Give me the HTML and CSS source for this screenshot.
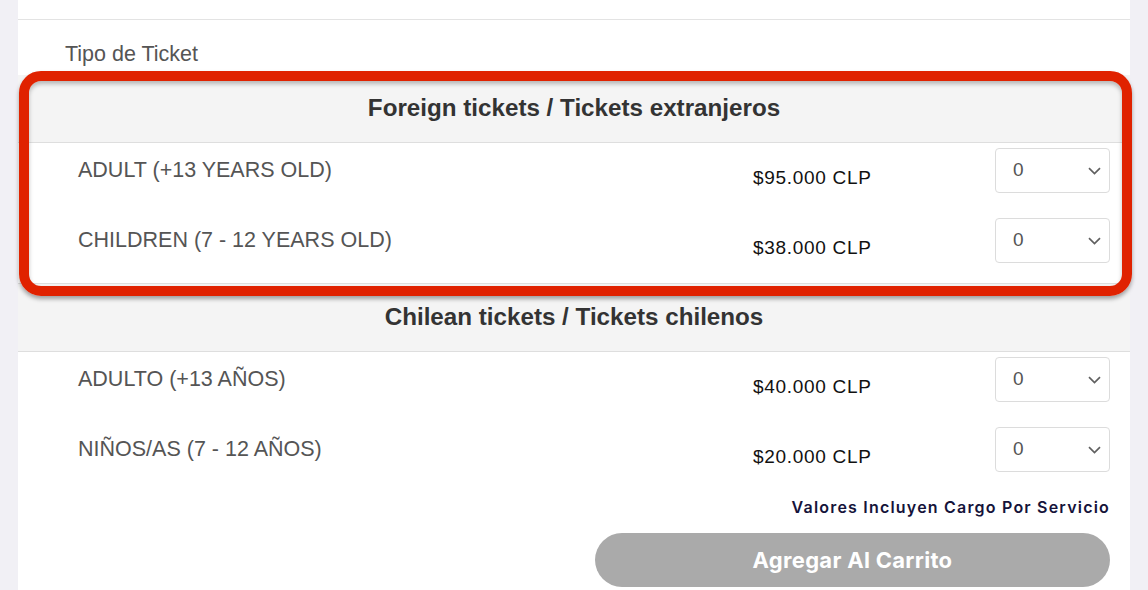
FILE: index.html
```html
<!DOCTYPE html>
<html lang="es">
<head>
<meta charset="utf-8">
<title>Tipo de Ticket</title>
<link rel="stylesheet" href="styles.css">
</head>
<body>
<div class="page">
  <div class="card">
    <div class="topbar"></div>
    <div class="type-label">Tipo de Ticket</div>

    <section class="group group-first">
      <h2 class="group-title">Foreign tickets / Tickets extranjeros</h2>
      <div class="row">
        <div class="name">ADULT (+13 YEARS OLD)</div>
        <div class="price">$95.000 CLP</div>
        <div class="qty"><span>0</span><svg class="chev" viewBox="0 0 13 8" width="13" height="8"><path d="M1 1.2 L6.5 6.5 L12 1.2" fill="none" stroke="#606060" stroke-width="1.7"/></svg></div>
      </div>
      <div class="row">
        <div class="name">CHILDREN (7 - 12 YEARS OLD)</div>
        <div class="price">$38.000 CLP</div>
        <div class="qty"><span>0</span><svg class="chev" viewBox="0 0 13 8" width="13" height="8"><path d="M1 1.2 L6.5 6.5 L12 1.2" fill="none" stroke="#606060" stroke-width="1.7"/></svg></div>
      </div>
      <div class="highlight"></div>
    </section>

    <section class="group">
      <h2 class="group-title">Chilean tickets / Tickets chilenos</h2>
      <div class="row">
        <div class="name">ADULTO (+13 AÑOS)</div>
        <div class="price">$40.000 CLP</div>
        <div class="qty"><span>0</span><svg class="chev" viewBox="0 0 13 8" width="13" height="8"><path d="M1 1.2 L6.5 6.5 L12 1.2" fill="none" stroke="#606060" stroke-width="1.7"/></svg></div>
      </div>
      <div class="row">
        <div class="name">NIÑOS/AS (7 - 12 AÑOS)</div>
        <div class="price">$20.000 CLP</div>
        <div class="qty"><span>0</span><svg class="chev" viewBox="0 0 13 8" width="13" height="8"><path d="M1 1.2 L6.5 6.5 L12 1.2" fill="none" stroke="#606060" stroke-width="1.7"/></svg></div>
      </div>
    </section>

    <div class="footer">
      <div class="note">Valores Incluyen Cargo Por Servicio</div>
      <button class="cart" type="button">Agregar Al Carrito</button>
    </div>
  </div>
</div>
</body>
</html>
```

FILE: styles.css
```css
* { box-sizing: border-box; }
html, body { margin: 0; padding: 0; }
body {
  background: #f1f0f5;
  font-family: "Liberation Sans", Arial, sans-serif;
  width: 1148px;
  height: 590px;
  overflow: hidden;
}
.page {
  padding: 0 18px;
}
.card {
  background: #ffffff;
  width: 1112px;
  height: 600px;
}
.topbar {
  height: 20px;
  border-bottom: 1px solid #e3e3e3;
}
.type-label {
  color: #555;
  font-size: 21.5px;
  padding: 22px 0 0 47px;
  height: 55px;
  line-height: 24px;
}
.group {
  position: relative;
}
.group-first {
  border-bottom: 1px solid #dedede;
}
.group-title {
  margin: 0;
  background: #f4f4f4;
  border-bottom: 1px solid #dedede;
  height: 68px;
  line-height: 66px;
  text-align: center;
  font-size: 24.2px;
  font-weight: bold;
  color: #333;
}
.row {
  display: grid;
  grid-template-columns: 675px 242px 115px;
  padding-left: 60px;
  height: 70px;
  align-items: start;
}
.name {
  color: #555;
  font-size: 21.5px;
  line-height: 24px;
  padding-top: 15px;
}
.price {
  color: #111;
  font-size: 19px;
  line-height: 22px;
  padding-top: 24px;
  letter-spacing: 0.7px;
}
.qty {
  margin-top: 5px;
  height: 45px;
  border: 1px solid #dcdcdc;
  border-radius: 4px;
  display: flex;
  align-items: center;
  justify-content: space-between;
  padding: 0 8px 0 17px;
  color: #555;
  font-size: 19px;
}
.qty span { position: relative; top: -1px; }
.chev { display: block; }
.highlight {
  position: absolute;
  z-index: 2;
  left: 1px;
  top: -4px;
  width: 1113px;
  height: 225px;
  border: 10px solid #e02200;
  border-radius: 22px;
  box-shadow: 0 3px 4px rgba(0,0,0,0.35), inset 0 3px 4px rgba(0,0,0,0.25);
  pointer-events: none;
}
.footer {
  display: flex;
  flex-direction: column;
  align-items: flex-end;
  padding: 0 20px 0 0;
}
.note {
  margin-top: 5px;
  font-family: Inter, "Open Sans", sans-serif;
  font-weight: 600;
  font-size: 16px;
  letter-spacing: 1.2px;
  color: #15133a;
  line-height: 20px;
}
.cart {
  margin-top: 16px;
  width: 515px;
  height: 54px;
  border: none;
  border-radius: 27px;
  background: #aaaaaa;
  color: #fff;
  font-family: Inter, "Open Sans", sans-serif;
  font-weight: 700;
  font-size: 22px;
  letter-spacing: 0.3px;
}
```
